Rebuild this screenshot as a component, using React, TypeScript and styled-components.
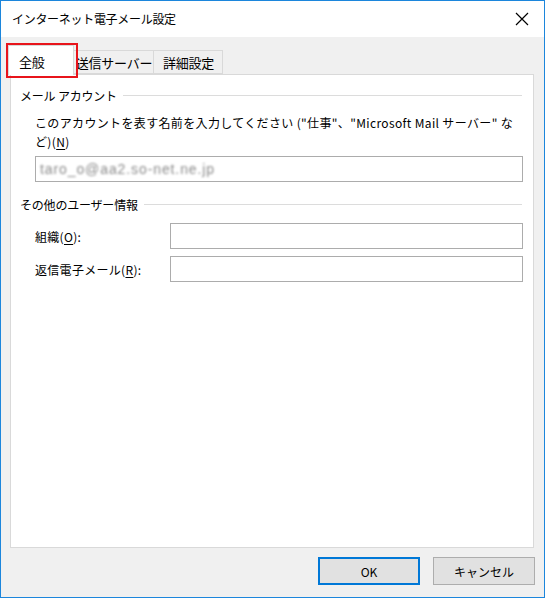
import React from "react";
import styled, { createGlobalStyle } from "styled-components";

const Global = createGlobalStyle`
  html, body { margin: 0; padding: 0; background: #ffffff; }
  * { box-sizing: border-box; }
  body { font-family: "Noto Sans CJK JP", "Noto Sans", sans-serif; font-size: 12px; color: #000; }
`;

const Window = styled.div`
  width: 545px;
  height: 598px;
  border: 1px solid #1c86dc;
  background: #f0f0f0;
  display: flex;
  flex-direction: column;
  position: relative;
`;

const TitleBar = styled.div`
  height: 36px;
  background: #ffffff;
  display: flex;
  align-items: center;
  justify-content: space-between;
  padding: 0 15px 0 11px;
`;

const Title = styled.div`
  font-size: 12px;
  color: #000;
  letter-spacing: -0.3px;
  margin-top: -1px;
`;

const Close = styled.div`
  width: 14px;
  height: 14px;
  display: flex;
  margin-top: -1px;
`;

const Body = styled.div`
  flex: 1;
  display: flex;
  flex-direction: column;
  padding: 8px 10px 0 9px;
`;

const TabStrip = styled.div`
  display: flex;
  align-items: flex-end;
  margin-left: -2px;
  height: 30px;
  margin-bottom: -1px;
  position: relative;
  z-index: 1;
`;

const Tab = styled.div<{ $active?: boolean; $w: number }>`
  width: ${(p) => p.$w}px;
  height: ${(p) => (p.$active ? 30 : 24)}px;
  margin-bottom: ${(p) => (p.$active ? 0 : 1)}px;
  background: ${(p) => (p.$active ? "#ffffff" : "#f0f0f0")};
  border: 1px solid #d9d9d9;
  border-bottom: ${(p) => (p.$active ? "none" : "1px solid #d9d9d9")};
  margin-right: -1px;
  display: flex;
  align-items: center;
  justify-content: ${(p) => (p.$active ? "flex-start" : "center")};
  padding-left: ${(p) => (p.$active ? 10 : 1)}px;
  padding-top: ${(p) => (p.$active ? 1 : 0)}px;
  font-size: 13px;
  letter-spacing: -0.2px;
  white-space: nowrap;
  color: #000;
`;

const Highlight = styled.div`
  position: absolute;
  left: 5px;
  top: 42px;
  width: 72px;
  height: 35px;
  border: 2px solid #e8141b;
  z-index: 5;
  pointer-events: none;
`;

const Panel = styled.div`
  flex: 1;
  background: #ffffff;
  border: 1px solid #d9d9d9;
  padding: 10px 10px 0 9px;
  display: flex;
  flex-direction: column;
`;

const GroupHeader = styled.div`
  display: flex;
  align-items: center;
  gap: 6px;
  height: 20px;
  font-size: 12px;
  padding-right: 1px;
  letter-spacing: -0.2px;
`;

const GroupLine = styled.div`
  flex: 1;
  height: 1px;
  background: #dcdcdc;
`;

const GroupBody = styled.div`
  padding-left: 15px;
  display: flex;
  flex-direction: column;
`;

const Description = styled.div`
  margin-top: 8px;
  font-size: 12px;
  line-height: 19px;
  letter-spacing: 0.35px;
  white-space: nowrap;
`;

const Underline = styled.span`
  text-decoration: underline;
  text-underline-offset: 2px;
`;

const TextBox = styled.div<{ $w?: number }>`
  width: ${(p) => (p.$w ? `${p.$w}px` : "100%")};
  height: 26px;
  border: 1px solid #acacac;
  background: #ffffff;
  display: flex;
  align-items: center;
  padding-left: 4px;
`;

const Blurred = styled.span`
  color: #8a8a8a;
  font-family: "Liberation Sans", sans-serif;
  font-size: 14px;
  letter-spacing: 0.9px;
  filter: blur(1.3px);
`;

const FieldRow = styled.div`
  display: flex;
  align-items: center;
  justify-content: space-between;
  height: 26px;
`;

const FieldLabel = styled.div`
  font-size: 12px;
  letter-spacing: 0.3px;
`;

const Footer = styled.div`
  height: 49px;
  display: flex;
  justify-content: flex-end;
  align-items: flex-start;
  gap: 13px;
  padding: 9px 9px 0 0;
`;

const Button = styled.div<{ $default?: boolean }>`
  width: 102px;
  height: 28px;
  background: #e1e1e1;
  border: ${(p) => (p.$default ? "2px solid #0078d7" : "1px solid #adadad")};
  display: flex;
  align-items: center;
  justify-content: center;
  font-size: 12px;
  color: #000;
`;

const Spacer = styled.div<{ $h: number }>`
  height: ${(p) => p.$h}px;
  flex-shrink: 0;
`;

export default function App() {
  return (
    <>
      <Global />
      <Window>
        <TitleBar>
          <Title>インターネット電子メール設定</Title>
          <Close>
            <svg width="14" height="14" viewBox="0 0 14 14">
              <path d="M1 1 L13 13 M13 1 L1 13" stroke="#000" strokeWidth="1.2" fill="none" />
            </svg>
          </Close>
        </TitleBar>
        <Highlight />
        <Body>
          <TabStrip>
            <Tab $active $w={66}>全般</Tab>
            <Tab $w={81}>送信サーバー</Tab>
            <Tab $w={70}>詳細設定</Tab>
          </TabStrip>
          <Panel>
            <GroupHeader>
              <span>メール アカウント</span>
              <GroupLine />
            </GroupHeader>
            <GroupBody>
              <Description>
                このアカウントを表す名前を入力してください ("仕事"、"Microsoft Mail サーバー" な
                <br />
                ど)(<Underline>N</Underline>)
              </Description>
              <Spacer $h={5} />
              <TextBox>
                <Blurred>taro_o@aa2.so-net.ne.jp</Blurred>
              </TextBox>
            </GroupBody>
            <Spacer $h={12} />
            <GroupHeader>
              <span>その他のユーザー情報</span>
              <GroupLine />
            </GroupHeader>
            <GroupBody>
              <Spacer $h={9} />
              <FieldRow>
                <FieldLabel>
                  組織(<Underline>O</Underline>):
                </FieldLabel>
                <TextBox $w={353} />
              </FieldRow>
              <Spacer $h={7} />
              <FieldRow>
                <FieldLabel>
                  返信電子メール(<Underline>R</Underline>):
                </FieldLabel>
                <TextBox $w={353} />
              </FieldRow>
            </GroupBody>
          </Panel>
        </Body>
        <Footer>
          <Button $default>OK</Button>
          <Button>キャンセル</Button>
        </Footer>
      </Window>
    </>
  );
}
